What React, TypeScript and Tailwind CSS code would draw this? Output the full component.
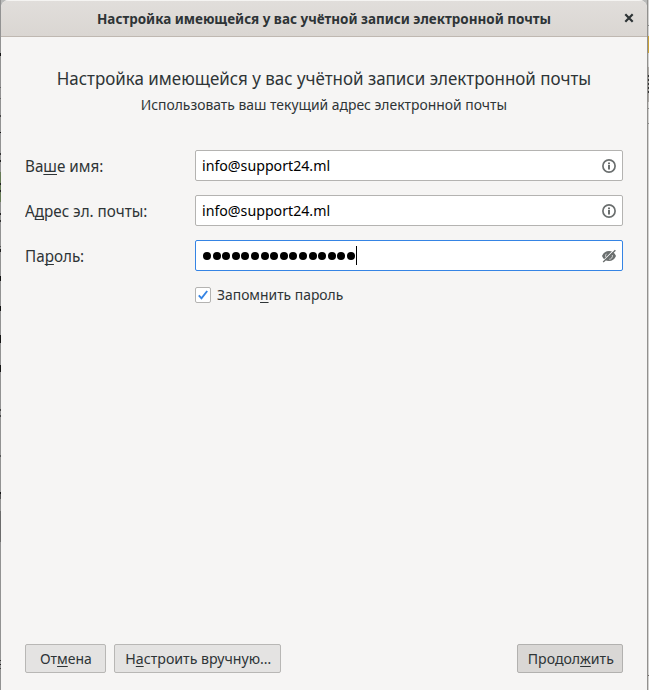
import { useState } from "react";
import { clsx } from "clsx";

const fields = [
  { before: "Ва", key: "ш", after: "е имя:", value: "info@support24.ml" },
  { before: "А", key: "д", after: "рес эл. почты:", value: "info@support24.ml" },
];

// Bits of the desktop that stay visible beside the window
const leftEdge = [
  { top: 53, height: 3, color: "#151515" },
  { top: 87, height: 1, color: "#666666" },
  { top: 98, height: 1, color: "#666666" },
  { top: 115, height: 2, color: "#444444" },
  { top: 132, height: 1, color: "#111111" },
  { top: 153, height: 2, color: "#333333" },
  { top: 160, height: 2, color: "#222222" },
  { top: 172, height: 30, color: "#667a55" },
  { top: 183, height: 2, color: "#222222" },
  { top: 190, height: 2, color: "#222222" },
  { top: 213, height: 2, color: "#222222" },
  { top: 220, height: 2, color: "#333333" },
  { top: 246, height: 1, color: "#555555" },
  { top: 249, height: 3, color: "#222222" },
  { top: 276, height: 5, color: "#111111" },
  { top: 306, height: 5, color: "#111111" },
  { top: 335, height: 8, color: "#151515" },
  { top: 365, height: 7, color: "#151515" },
  { top: 409, height: 2, color: "#444444" },
  { top: 415, height: 2, color: "#444444" },
  { top: 455, height: 2, color: "#555555" },
  { top: 492, height: 2, color: "#151515" },
  { top: 494, height: 5, color: "#555555" },
  { top: 511, height: 31, color: "#6b6b6b" },
  { top: 660, height: 1, color: "#333333" },
  { top: 664, height: 1, color: "#222222" },
  { top: 668, height: 1, color: "#444444" },
];

const rightEdge = [
  { top: 25, height: 1, color: "#8a8a88" },
  { top: 36, height: 17, color: "#c9a137" },
  { top: 67, height: 35, color: "#aaa6a2" },
  { top: 75, height: 2, color: "#333333" },
  { top: 79, height: 2, color: "#333333" },
  { top: 83, height: 2, color: "#333333" },
  { top: 87, height: 2, color: "#333333" },
  { top: 91, height: 2, color: "#333333" },
  { top: 108, height: 1, color: "#8a8a88" },
  { top: 123, height: 1, color: "#8a8a88" },
  { top: 675, height: 1, color: "#6f6a66" },
];

function Edge({ marks, className }: { marks: typeof leftEdge; className: string }) {
  return (
    <div className={clsx("relative w-px shrink-0", className)}>
      {marks.map((m) => (
        <span
          key={m.top}
          className="absolute left-0 w-full"
          style={{ top: m.top, height: m.height, backgroundColor: m.color }}
        />
      ))}
    </div>
  );
}

type MnemonicProps = { before: string; k: string; after: string; className?: string };

function Mnemonic({ before, k, after, className }: MnemonicProps) {
  return (
    <span className={clsx("inline-block whitespace-nowrap", className)}>
      {before}
      <span className="underline decoration-1 underline-offset-2 [text-decoration-skip-ink:none]">{k}</span>
      {after}
    </span>
  );
}

function InfoIcon() {
  return (
    <svg width="16" height="16" viewBox="0 0 16 16" fill="none" className="shrink-0">
      <circle cx="8" cy="8" r="6.1" stroke="#6b6f6f" strokeWidth="1.7" />
      <path d="M7 4.500h2v1.700H7zM7 7h2v4.500H7z" fill="#6b6f6f" />
    </svg>
  );
}

function HiddenIcon() {
  return (
    <svg width="16" height="16" viewBox="0 0 16 16" className="shrink-0">
      <path
        d="M1 8C2.300 4.800 5 3 8 3s5.700 1.800 7 5c-1.300 3.200-4 5-7 5S2.300 11.200 1 8z"
        fill="#6b6f6f"
      />
      <path d="M5.300 5.800a3.400 3.400 0 0 0-.5 3.300M11.300 7a3.400 3.400 0 0 1-3 4.300" fill="none" stroke="#fff" strokeWidth=".7" />
      <path d="M1 14.200 14 1.200" stroke="#fff" strokeWidth="1.200" />
      <path d="M2.200 14 14.400 2.200" stroke="#6b6f6f" strokeWidth="1.400" />
    </svg>
  );
}

export default function App() {
  const [remember, setRemember] = useState(true);

  return (
    <div className="flex h-[690px] w-[649px] overflow-hidden bg-[#b9bab9] font-['Noto_Sans',sans-serif] text-[#2e3436]">
      <Edge marks={leftEdge} className="bg-[#929292]" />
      <div className="flex w-[646px] shrink-0 flex-col overflow-hidden rounded-t-lg bg-[#f6f5f4]">
        <header className="flex h-[37px] shrink-0 items-center border-b border-[#bfb8b1] bg-linear-to-b from-[#e1dedb] to-[#dad6d2] shadow-[inset_0_1px_#f5f4f2]">
          <h1 className="ml-24 w-[454px] origin-left scale-x-[0.897] text-[15px] font-bold whitespace-nowrap">
            Настройка имеющейся у вас учётной записи электронной почты
          </h1>
          <button className="mr-[13px] ml-auto">
            <svg width="10" height="10" viewBox="0 0 10 10" stroke="#2e3436" strokeWidth="2.2">
              <path d="m1.300 1.300 7.400 7.400M8.700 1.300 1.300 8.700" />
            </svg>
          </button>
        </header>

        <main className="flex flex-1 flex-col px-6 pt-7 pb-[17px]">
          <div className="flex flex-col items-center whitespace-nowrap">
            <h2 className="scale-x-[0.941] text-[18px] leading-[26px]">
              Настройка имеющейся у вас учётной записи электронной почты
            </h2>
            <p className="scale-x-[0.926] text-[15px] leading-[26px]">
              Использовать ваш текущий адрес электронной почты
            </p>
          </div>

          <form className="mt-[33px] flex flex-col gap-3.5">
            {fields.map((f) => (
              <div key={f.before} className="flex items-center">
                <label className="w-[170px] text-[16px] leading-[22px]">
                  <Mnemonic before={f.before} k={f.key} after={f.after} className="origin-left scale-x-[0.952]" />
                </label>
                <div className="flex h-[31px] w-[428px] items-center justify-between rounded-xs border border-[#b4b3b1] bg-white pr-[5px] pl-1.5 text-[15px] text-black">
                  <span className="origin-left scale-x-[0.945]">{f.value}</span>
                  <InfoIcon />
                </div>
              </div>
            ))}
            <div className="flex items-center">
              <label className="w-[170px] text-[16px] leading-[22px]">
                <Mnemonic before="Па" k="р" after="оль:" className="origin-left scale-x-[0.952]" />
              </label>
              <div className="flex h-[31px] w-[428px] items-center justify-between rounded-xs border border-[#3584e4] bg-white pr-[5px] pl-[7px]">
                <div className="flex items-center gap-[1.600px]">
                  {Array.from({ length: 16 }, (_, i) => (
                    <span key={i} className="size-2 rounded-full bg-black" />
                  ))}
                  <span className="-ml-px h-[19px] w-px bg-black" />
                </div>
                <HiddenIcon />
              </div>
            </div>
          </form>

          <button onClick={() => setRemember(!remember)} className="mt-[13px] ml-[170px] flex items-center gap-1.5 self-start">
            <span className="flex size-4 items-center justify-center rounded-xs border border-[#b4b3b1] bg-white">
              {remember && (
                <svg width="12" height="12" viewBox="0 0 12 12" fill="none" stroke="#3584e4" strokeWidth="1.900">
                  <path d="m1.800 6.300 2.700 3L10.200 2" />
                </svg>
              )}
            </span>
            <span className="text-[15px] leading-[21px]">
              <Mnemonic before="Запом" k="н" after="ить пароль" className="origin-left scale-x-[0.925]" />
            </span>
          </button>

          <footer className="mt-auto flex gap-2 text-[15px] whitespace-nowrap">
            <button className="h-[29px] w-[81px] rounded-xs border border-[#b8b7b5] bg-[#e4e3e2] pl-px">
              <Mnemonic before="От" k="м" after="ена" className="scale-x-[0.93]" />
            </button>
            <button className="h-[29px] w-[167px] rounded-xs border border-[#b8b7b5] bg-[#e4e3e2] pl-px">
              <Mnemonic before="Н" k="а" after="строить вручную…" className="scale-x-[0.945]" />
            </button>
            <button className="ml-auto h-[29px] w-[106px] rounded-xs border border-[#b2b1af] bg-[#d9d7d5] pl-px">
              <Mnemonic before="Продол" k="ж" after="ить" className="scale-x-[0.94]" />
            </button>
          </footer>
        </main>
      </div>
      <div className="w-px shrink-0 bg-[#92918f]" />
      <Edge marks={rightEdge} className="bg-[#d3d2d0]" />
    </div>
  );
}
